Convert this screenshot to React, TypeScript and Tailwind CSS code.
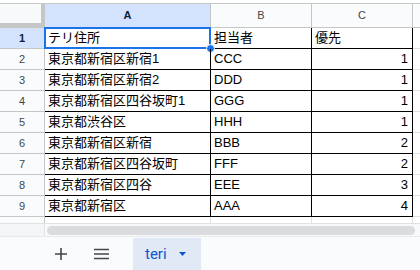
import React from "react";

// Sheet rows: address, owner, priority
const rows: [string, string, string][] = [
  ["テリ住所", "担当者", "優先"],
  ["東京都新宿区新宿1", "CCC", "1"],
  ["東京都新宿区新宿2", "DDD", "1"],
  ["東京都新宿区四谷坂町1", "GGG", "1"],
  ["東京都渋谷区", "HHH", "1"],
  ["東京都新宿区新宿", "BBB", "2"],
  ["東京都新宿区四谷坂町", "FFF", "2"],
  ["東京都新宿区四谷", "EEE", "3"],
  ["東京都新宿区", "AAA", "4"],
];

const font = "font-['Liberation_Sans','Noto_Sans_CJK_JP',sans-serif]";

const App = () => {
  return (
    <div className={`w-[420px] h-[270px] overflow-hidden bg-white flex flex-col ${font}`}>
      <div className="h-[3px] bg-white" />

      {/* Column headers */}
      <div className="flex h-[25px] border-t border-b border-[#c4c7c5] text-[11px] text-[#444746]">
        <div className="w-[45px] shrink-0 flex flex-col bg-[#f8f9fa]">
          <div className="flex flex-1">
            <div className="flex-1" />
            <div className="w-[4px] bg-[#c4c7c5]" />
          </div>
          <div className="h-[4px] bg-[#c4c7c5]" />
        </div>
        <div className="w-[166px] shrink-0 flex items-center justify-center bg-[#d3e3fd] border-r border-[#c4c7c5] font-bold text-[#0b1f3a]">
          A
        </div>
        <div className="w-[101px] shrink-0 flex items-center justify-center bg-[#f9fbfd] border-r border-[#c4c7c5]">
          B
        </div>
        <div className="w-[101px] shrink-0 flex items-center justify-center bg-[#f9fbfd] border-r border-[#c4c7c5]">
          C
        </div>
        <div className="flex-1 bg-[#f9fbfd]" />
      </div>

      {/* Data rows */}
      {rows.map((r, i) => (
        <div key={i} className="flex h-[21px] shrink-0 text-[13px] text-black">
          <div
            className={`w-[45px] shrink-0 flex items-center justify-center border-r border-b border-[#c4c7c5] text-[11px] ${
              i === 0 ? "bg-[#d3e3fd] font-bold text-[#0b1f3a]" : "bg-[#f9fbfd] text-[#444746]"
            }`}
          >
            {i + 1}
          </div>
          <div className="relative w-[166px] shrink-0 border-r border-b border-black pl-[3px] leading-[20px] whitespace-nowrap">
            {r[0]}
            {i === 0 && (
              <>
                <div className="absolute -left-px -top-px right-[-1px] bottom-[-1px] border-2 border-[#1a73e8]" />
                <div className="absolute right-[-5px] bottom-[-5px] w-[9px] h-[9px] rounded-full bg-[#1a73e8] border border-white" />
              </>
            )}
          </div>
          <div className="w-[101px] shrink-0 border-r border-b border-black pl-[3px] leading-[20px]">
            {r[1]}
          </div>
          <div
            className={`w-[101px] shrink-0 border-r border-b border-black pr-[4px] leading-[20px] ${
              i === 0 ? "text-left pl-[3px]" : "text-right"
            }`}
          >
            {r[2]}
          </div>
          <div className="flex-1 border-b border-[#e1e1e1]" />
        </div>
      ))}

      {/* Row 10 (cut off by the scrollbar) */}
      <div className="flex h-[6px] shrink-0 overflow-hidden">
        <div className="w-[45px] shrink-0 border-r border-[#c4c7c5] bg-[#f9fbfd] flex justify-center text-[11px] text-[#444746] leading-[20px]">
          10
        </div>
        <div className="w-[166px] shrink-0 border-r border-[#e1e1e1]" />
        <div className="w-[101px] shrink-0 border-r border-[#e1e1e1]" />
        <div className="w-[101px] shrink-0 border-r border-[#e1e1e1]" />
        <div className="flex-1" />
      </div>

      {/* Horizontal scrollbar */}
      <div className="flex h-[13px] shrink-0 border-t border-[#e1e1e1] bg-[#f8f9fa]">
        <div className="w-[45px] shrink-0 border-r border-[#e1e1e1] bg-[#f4f5f6]" />
        <div className="flex-1 flex items-center pl-[2px] pr-[5px]">
          <div className="h-[9px] w-full rounded-full bg-[#dadce0]" />
        </div>
      </div>

      {/* Sheet tabs */}
      <div className="flex flex-1 items-stretch bg-[#f9fbfd] border-t border-[#e8eaed]">
        <div className="w-[50px]" />
        <div className="w-[22px] flex items-center justify-center text-[#444746]">
          <svg width="14" height="14" viewBox="0 0 14 14">
            <path d="M7 1v12M1 7h12" stroke="currentColor" strokeWidth="1.6" />
          </svg>
        </div>
        <div className="w-[18px]" />
        <div className="w-[22px] flex items-center justify-center text-[#444746]">
          <svg width="15" height="12" viewBox="0 0 15 12">
            <path d="M0 1.5h15M0 6h15M0 10.5h15" stroke="currentColor" strokeWidth="1.6" />
          </svg>
        </div>
        <div className="w-[21px]" />
        <div className="w-[68px] mt-px flex items-center bg-[#e1e9f7] pl-[12px] gap-[12px]">
          <span className="text-[15px] text-[#0b57d0] font-['Roboto',sans-serif]">teri</span>
          <svg width="7" height="4" viewBox="0 0 7 4">
            <path d="M0 0h7L3.5 4z" fill="#0b57d0" />
          </svg>
        </div>
        <div className="flex-1" />
      </div>
    </div>
  );
};

export default App;
